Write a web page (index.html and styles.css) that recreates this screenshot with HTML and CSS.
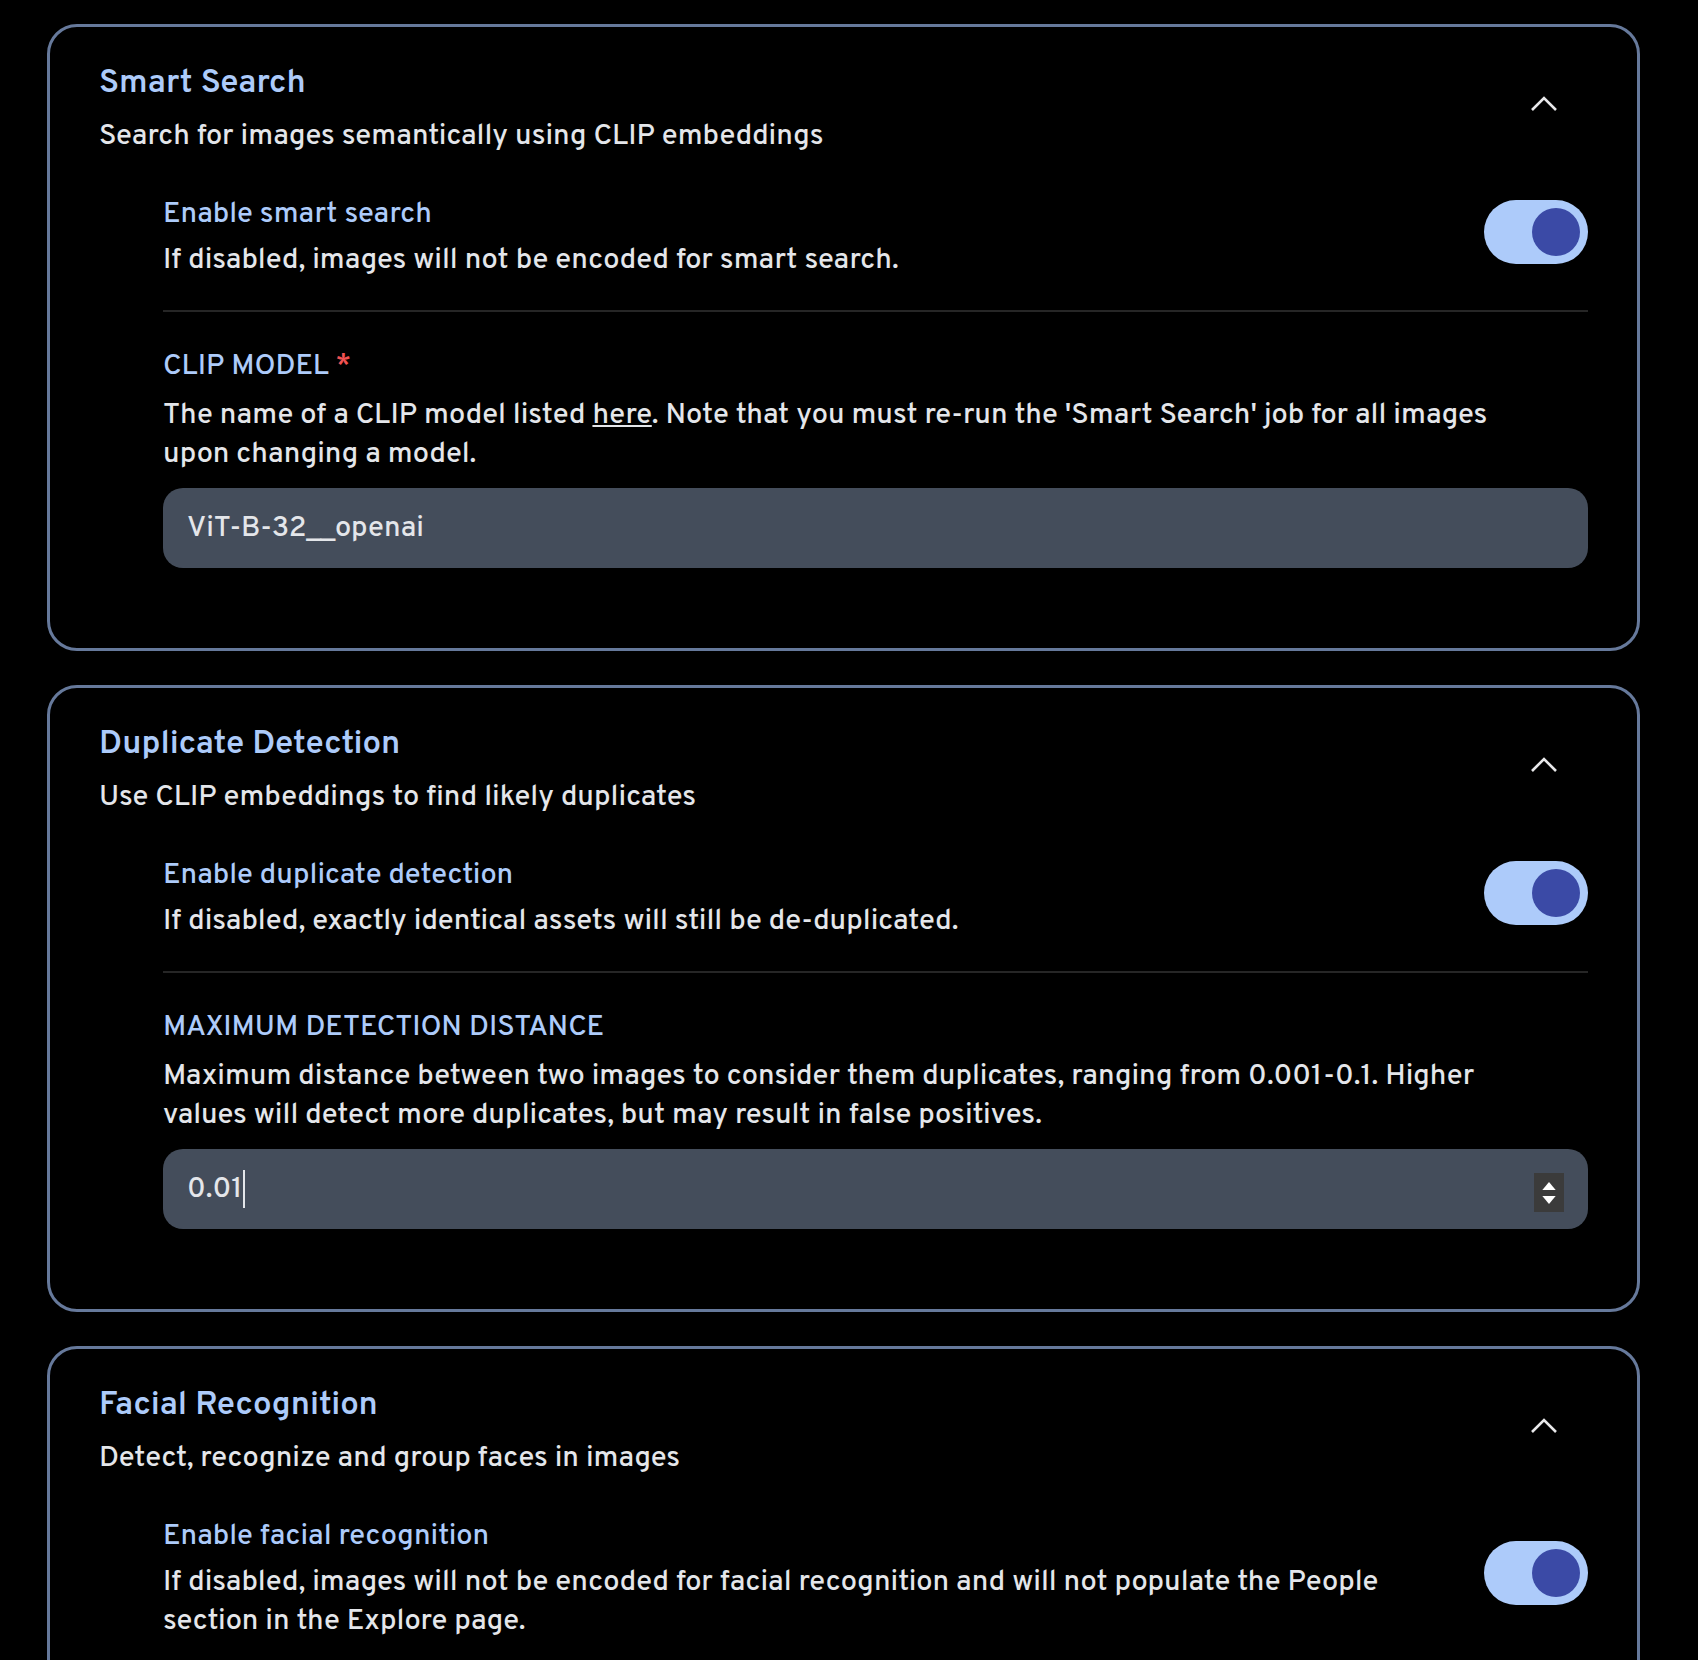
FILE: index.html
```html
<!DOCTYPE html>
<html lang="en">
<head>
    <meta charset="UTF-8">
    <meta name="viewport" content="width=device-width, initial-scale=1.0">
    <title>Machine Learning Settings</title>
    <link rel="stylesheet" href="styles.css">
</head>
<body>
    <div class="settings">
        <!-- Smart search -->
        <section class="card">
            <div class="card-head">
                <div>
                    <h2 class="card-title">Smart Search</h2>
                    <p class="card-subtitle">Search for images semantically using CLIP embeddings</p>
                </div>
                <svg class="chevron" viewBox="0 0 28 18"><polyline points="2,16 14,4 26,16"/></svg>
            </div>
            <div class="card-body">
                <div class="switch-row">
                    <div>
                        <div class="setting-label">Enable smart search</div>
                        <p class="setting-desc">If disabled, images will not be encoded for smart search.</p>
                    </div>
                    <div class="toggle"><span class="knob"></span></div>
                </div>
                <div class="field-block">
                    <div class="field-label">CLIP MODEL <span class="required">*</span></div>
                    <p class="setting-desc">The name of a CLIP model listed <a href="#">here</a>. Note that you must re-run the 'Smart Search' job for all images upon changing a model.</p>
                    <div class="field"><span class="field-value">ViT-B-32__openai</span></div>
                </div>
            </div>
        </section>

        <!-- Duplicate detection -->
        <section class="card">
            <div class="card-head">
                <div>
                    <h2 class="card-title">Duplicate Detection</h2>
                    <p class="card-subtitle">Use CLIP embeddings to find likely duplicates</p>
                </div>
                <svg class="chevron" viewBox="0 0 28 18"><polyline points="2,16 14,4 26,16"/></svg>
            </div>
            <div class="card-body">
                <div class="switch-row">
                    <div>
                        <div class="setting-label">Enable duplicate detection</div>
                        <p class="setting-desc">If disabled, exactly identical assets will still be de-duplicated.</p>
                    </div>
                    <div class="toggle"><span class="knob"></span></div>
                </div>
                <div class="field-block">
                    <div class="field-label">MAXIMUM DETECTION DISTANCE</div>
                    <p class="setting-desc">Maximum distance between two images to consider them duplicates, ranging from 0.001-0.1. Higher values will detect more duplicates, but may result in false positives.</p>
                    <div class="field">
                        <span class="field-value">0.01</span><span class="caret"></span>
                        <span class="spinner">
                            <svg viewBox="0 0 10 6"><path d="M5 0 10 6H0z"/></svg>
                            <svg viewBox="0 0 10 6"><path d="M0 0h10L5 6z"/></svg>
                        </span>
                    </div>
                </div>
            </div>
        </section>

        <!-- Facial recognition -->
        <section class="card">
            <div class="card-head">
                <div>
                    <h2 class="card-title">Facial Recognition</h2>
                    <p class="card-subtitle">Detect, recognize and group faces in images</p>
                </div>
                <svg class="chevron" viewBox="0 0 28 18"><polyline points="2,16 14,4 26,16"/></svg>
            </div>
            <div class="card-body">
                <div class="switch-row">
                    <div>
                        <div class="setting-label">Enable facial recognition</div>
                        <p class="setting-desc">If disabled, images will not be encoded for facial recognition and will not populate the People section in the Explore page.</p>
                    </div>
                    <div class="toggle"><span class="knob"></span></div>
                </div>
            </div>
        </section>
    </div>
</body>
</html>
```

FILE: styles.css
```css
/* Dark settings page */
body {
    margin: 0;
    background: #000;
    color: #e4e6ea;
    font-family: "Overpass", Roboto, "Liberation Sans", sans-serif;
}
.settings {
    display: flex;
    flex-direction: column;
    gap: 34px;
    padding: 24px 58px 0 47px;
}
.card {
    border: 3px solid #66799b;
    border-radius: 30px;
    padding: 37px 49px 80px 49px;
}
.card-head {
    display: flex;
    justify-content: space-between;
    align-items: flex-start;
}
.card-title {
    margin: 0;
    color: #adcbfa;
    font-size: 33px;
    font-weight: 600;
    line-height: 40px;
}
.card-subtitle {
    margin: 13px 0 0;
    font-size: 29px;
    font-weight: 500;
    line-height: 40px;
}
.chevron {
    width: 28px;
    height: 18px;
    margin: 30px 30px 0 0;
    fill: none;
    stroke: #e8e8ea;
    stroke-width: 2.6;
}
.card-body {
    margin: 38px 0 0 64px;
}
.switch-row {
    display: flex;
    justify-content: space-between;
    align-items: center;
    gap: 40px;
}
.switch-row + .field-block {
    margin-top: 30px;
    padding-top: 35px;
    border-top: 2px solid #262626;
}
.setting-label,
.field-label {
    color: #adcbfa;
    font-size: 29px;
    font-weight: 500;
    line-height: 40px;
}
.required {
    color: #f05252;
}
.setting-desc {
    margin: 6px 0 0;
    font-size: 29px;
    font-weight: 500;
    line-height: 39px;
}
.field-label + .setting-desc {
    margin-top: 9px;
    padding-right: 40px;
}
.setting-desc a {
    color: inherit;
}
.toggle {
    flex-shrink: 0;
    width: 104px;
    height: 64px;
    margin-bottom: 12px;
    border-radius: 32px;
    background: #adcbfa;
    display: flex;
    justify-content: flex-end;
    align-items: center;
    padding: 0 8px;
    box-sizing: border-box;
}
.knob {
    width: 48px;
    height: 48px;
    border-radius: 50%;
    background: #3b4aa6;
}
.field {
    margin-top: 14px;
    height: 80px;
    border-radius: 20px;
    background: #444d5b;
    display: flex;
    align-items: center;
    padding: 0 24px;
    font-size: 29px;
    font-weight: 500;
}
.caret {
    width: 2px;
    height: 38px;
    margin-left: 1px;
    background: #e4e6ea;
}
.spinner {
    margin-left: auto;
    margin-top: 7px;
    width: 30px;
    height: 39px;
    background: #3b3b3b;
    display: flex;
    flex-direction: column;
    justify-content: center;
    align-items: center;
    gap: 6px;
}
.spinner svg {
    width: 14px;
    height: 8px;
    fill: #fff;
}
```
